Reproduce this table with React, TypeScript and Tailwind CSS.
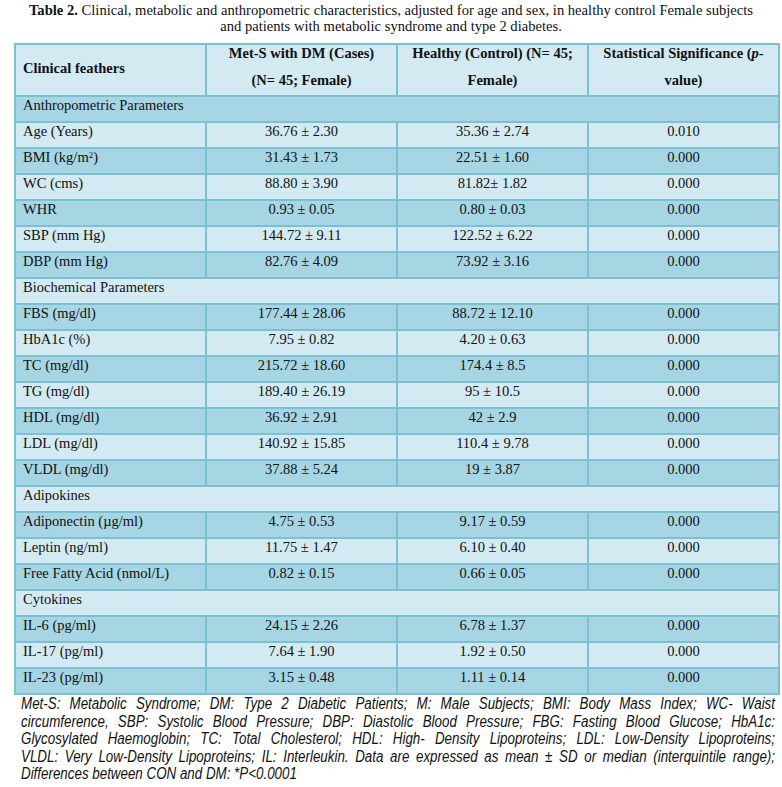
import React from "react";

type Row =
  | { kind: "section"; label: string }
  | { kind: "data"; label: React.ReactNode; cases: string; control: string; p: string };

const ROWS: Row[] = [
  { kind: "section", label: "Anthropometric Parameters" },
  { kind: "data", label: "Age (Years)", cases: "36.76 ± 2.30", control: "35.36 ± 2.74", p: "0.010" },
  {
    kind: "data",
    label: (
      <>
        BMI (kg/m<sup className="text-[9px]">2</sup>)
      </>
    ),
    cases: "31.43 ± 1.73",
    control: "22.51 ± 1.60",
    p: "0.000",
  },
  { kind: "data", label: "WC (cms)", cases: "88.80 ± 3.90", control: "81.82± 1.82", p: "0.000" },
  { kind: "data", label: "WHR", cases: "0.93 ± 0.05", control: "0.80 ± 0.03", p: "0.000" },
  { kind: "data", label: "SBP (mm Hg)", cases: "144.72 ± 9.11", control: "122.52 ± 6.22", p: "0.000" },
  { kind: "data", label: "DBP (mm Hg)", cases: "82.76 ± 4.09", control: "73.92 ± 3.16", p: "0.000" },
  { kind: "section", label: "Biochemical Parameters" },
  { kind: "data", label: "FBS (mg/dl)", cases: "177.44 ± 28.06", control: "88.72 ± 12.10", p: "0.000" },
  { kind: "data", label: "HbA1c (%)", cases: "7.95 ± 0.82", control: "4.20 ± 0.63", p: "0.000" },
  { kind: "data", label: "TC (mg/dl)", cases: "215.72 ± 18.60", control: "174.4 ± 8.5", p: "0.000" },
  { kind: "data", label: "TG (mg/dl)", cases: "189.40 ± 26.19", control: "95 ± 10.5", p: "0.000" },
  { kind: "data", label: "HDL (mg/dl)", cases: "36.92 ± 2.91", control: "42 ± 2.9", p: "0.000" },
  { kind: "data", label: "LDL (mg/dl)", cases: "140.92 ± 15.85", control: "110.4 ± 9.78", p: "0.000" },
  { kind: "data", label: "VLDL (mg/dl)", cases: "37.88 ± 5.24", control: "19 ± 3.87", p: "0.000" },
  { kind: "section", label: "Adipokines" },
  { kind: "data", label: "Adiponectin (µg/ml)", cases: "4.75 ± 0.53", control: "9.17 ± 0.59", p: "0.000" },
  { kind: "data", label: "Leptin (ng/ml)", cases: "11.75 ± 1.47", control: "6.10 ± 0.40", p: "0.000" },
  { kind: "data", label: "Free Fatty Acid (nmol/L)", cases: "0.82 ± 0.15", control: "0.66 ± 0.05", p: "0.000" },
  { kind: "section", label: "Cytokines" },
  { kind: "data", label: "IL-6 (pg/ml)", cases: "24.15 ± 2.26", control: "6.78 ± 1.37", p: "0.000" },
  { kind: "data", label: "IL-17 (pg/ml)", cases: "7.64 ± 1.90", control: "1.92 ± 0.50", p: "0.000" },
  { kind: "data", label: "IL-23 (pg/ml)", cases: "3.15 ± 0.48", control: "1.11 ± 0.14", p: "0.000" },
];

const FOOTNOTE = [
  "Met-S: Metabolic Syndrome; DM: Type 2 Diabetic Patients; M: Male Subjects; BMI: Body Mass Index; WC- Waist",
  "circumference, SBP: Systolic Blood Pressure; DBP: Diastolic Blood Pressure; FBG: Fasting Blood Glucose; HbA1c:",
  "Glycosylated Haemoglobin; TC: Total Cholesterol; HDL: High- Density Lipoproteins; LDL: Low-Density Lipoproteins;",
  "VLDL: Very Low-Density Lipoproteins; IL: Interleukin. Data are expressed as mean ± SD or median (interquintile range);",
];

export default function App() {
  return (
    <div className="w-[782px] h-[787px] bg-white text-[#111] font-['Liberation_Serif',serif] overflow-hidden">
      {/* Caption */}
      <div className="pt-[2px] text-center text-[14.6px] leading-[16px]">
        <span className="font-bold">Table 2.</span> Clinical, metabolic and anthropometric characteristics, adjusted for
        age and sex, in healthy control Female subjects
        <br />
        and patients with metabolic syndrome and type 2 diabetes.
      </div>

      {/* Table */}
      <table className="ml-[14px] mt-[9px] w-[766px] table-fixed border-collapse text-[14.5px]">
        <thead>
          <tr className="h-[52px] bg-[#d3eaf2]">
            <th className="border-2 border-[#7bc1d6] pl-[7px] pb-[5px] text-left font-bold align-middle leading-[18px]">
              Clinical feathers
            </th>
            <th className="border-2 border-[#7bc1d6] px-[6px] text-center font-bold align-top">
              <div className="-my-[5px] leading-[27px]">
                Met-S with DM (Cases)
                <br />
                (N= 45; Female)
              </div>
            </th>
            <th className="border-2 border-[#7bc1d6] px-[6px] text-center font-bold align-top">
              <div className="-my-[5px] leading-[27px]">
                Healthy (Control) (N= 45;
                <br />
                Female)
              </div>
            </th>
            <th className="border-2 border-[#7bc1d6] px-[6px] text-center font-bold align-top">
              <div className="-my-[5px] leading-[27px]">
                Statistical Significance (<i>p</i>-
                <br />
                value)
              </div>
            </th>
          </tr>
        </thead>
        <tbody>
          {ROWS.map((r, i) => {
            const bg = i % 2 === 0 ? "bg-[#a6d5e3]" : "bg-[#d3eaf2]";
            if (r.kind === "section") {
              return (
                <tr key={i} className={`h-[26px] ${bg}`}>
                  <td colSpan={4} className="border-2 border-[#7bc1d6] pl-[7px] align-top leading-[16px]">
                    {r.label}
                  </td>
                </tr>
              );
            }
            return (
              <tr key={i} className={`h-[26px] ${bg}`}>
                <td className="border-2 border-[#7bc1d6] pl-[7px] align-top leading-[16px]">{r.label}</td>
                <td className="border-2 border-[#7bc1d6] text-center align-top leading-[16px]">{r.cases}</td>
                <td className="border-2 border-[#7bc1d6] text-center align-top leading-[16px]">{r.control}</td>
                <td className="border-2 border-[#7bc1d6] text-center align-top leading-[16px]">{r.p}</td>
              </tr>
            );
          })}
        </tbody>
      </table>

      {/* Footnote: Arial Narrow look, via Liberation Sans squeezed horizontally */}
      <div className="mt-0 ml-[21px] w-[754px]">
        <div className="w-[903px] origin-left scale-x-[0.835] italic text-[16px] leading-[17.5px] font-['Liberation_Sans',sans-serif]">
          {FOOTNOTE.map((line, i) => (
            <div key={i} className="text-justify [text-align-last:justify] whitespace-nowrap">
              {line}
            </div>
          ))}
          <div>Differences between CON and DM: *P&lt;0.0001</div>
        </div>
      </div>
    </div>
  );
}
